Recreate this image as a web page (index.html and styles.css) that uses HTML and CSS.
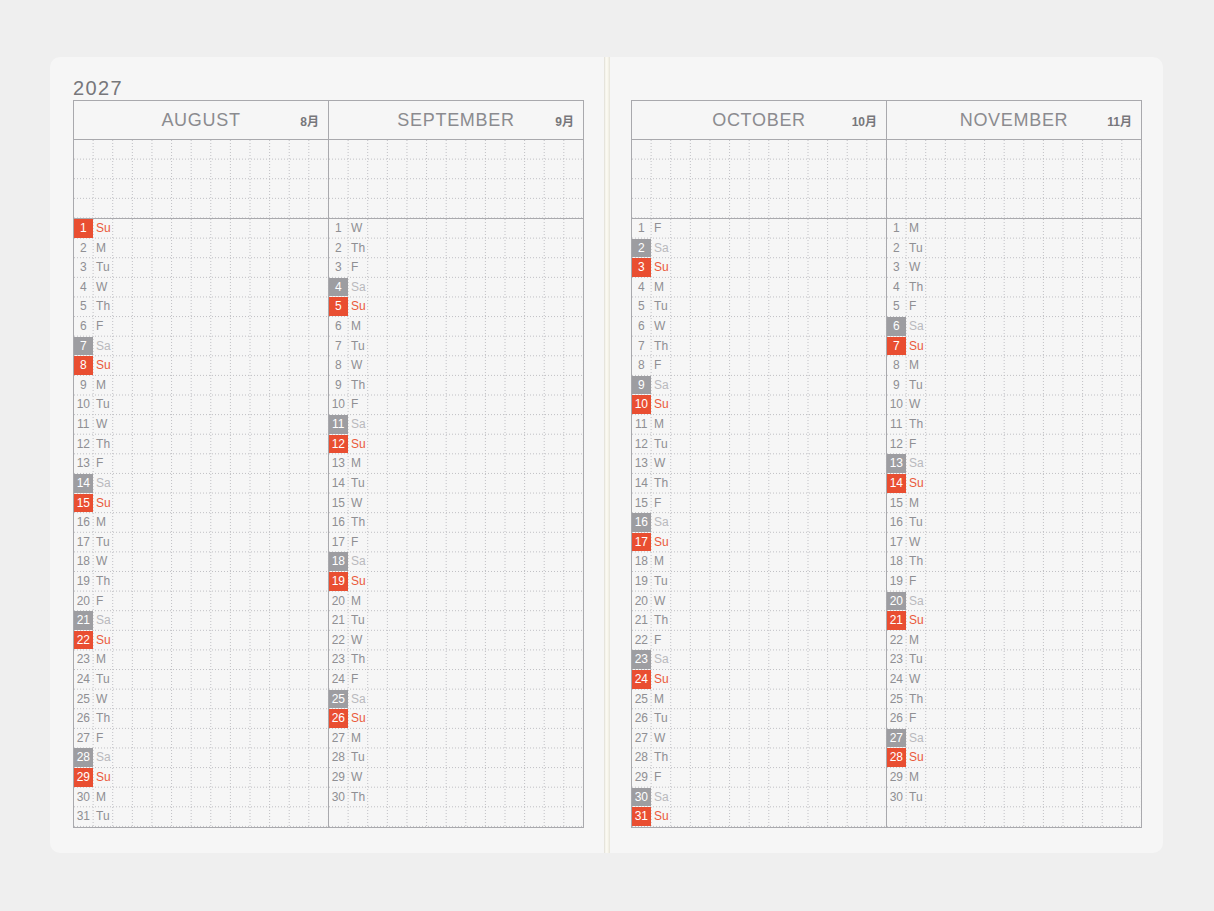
FILE: index.html
```html
<!DOCTYPE html>
<html lang="en">
<head>
<meta charset="utf-8">
<title>2027 Monthly Planner</title>
<link rel="stylesheet" href="styles.css">
</head>
<body>
<div class="spread">
  <section class="page page-left">
    <div class="year">2027</div>
    <div class="sheet">
      <div class="month">
        <div class="mhead"><span class="mname">AUGUST</span><span class="mjp">8月</span></div>
        <div class="notes dotgrid"></div>
        <ol class="days dotgrid">
          <li class="su"><span class="n">1</span><span class="w">Su</span></li>
          <li><span class="n">2</span><span class="w">M</span></li>
          <li><span class="n">3</span><span class="w">Tu</span></li>
          <li><span class="n">4</span><span class="w">W</span></li>
          <li><span class="n">5</span><span class="w">Th</span></li>
          <li><span class="n">6</span><span class="w">F</span></li>
          <li class="sa"><span class="n">7</span><span class="w">Sa</span></li>
          <li class="su"><span class="n">8</span><span class="w">Su</span></li>
          <li><span class="n">9</span><span class="w">M</span></li>
          <li><span class="n">10</span><span class="w">Tu</span></li>
          <li><span class="n">11</span><span class="w">W</span></li>
          <li><span class="n">12</span><span class="w">Th</span></li>
          <li><span class="n">13</span><span class="w">F</span></li>
          <li class="sa"><span class="n">14</span><span class="w">Sa</span></li>
          <li class="su"><span class="n">15</span><span class="w">Su</span></li>
          <li><span class="n">16</span><span class="w">M</span></li>
          <li><span class="n">17</span><span class="w">Tu</span></li>
          <li><span class="n">18</span><span class="w">W</span></li>
          <li><span class="n">19</span><span class="w">Th</span></li>
          <li><span class="n">20</span><span class="w">F</span></li>
          <li class="sa"><span class="n">21</span><span class="w">Sa</span></li>
          <li class="su"><span class="n">22</span><span class="w">Su</span></li>
          <li><span class="n">23</span><span class="w">M</span></li>
          <li><span class="n">24</span><span class="w">Tu</span></li>
          <li><span class="n">25</span><span class="w">W</span></li>
          <li><span class="n">26</span><span class="w">Th</span></li>
          <li><span class="n">27</span><span class="w">F</span></li>
          <li class="sa"><span class="n">28</span><span class="w">Sa</span></li>
          <li class="su"><span class="n">29</span><span class="w">Su</span></li>
          <li><span class="n">30</span><span class="w">M</span></li>
          <li><span class="n">31</span><span class="w">Tu</span></li>
        </ol>
      </div>
      <div class="month">
        <div class="mhead"><span class="mname">SEPTEMBER</span><span class="mjp">9月</span></div>
        <div class="notes dotgrid"></div>
        <ol class="days dotgrid">
          <li><span class="n">1</span><span class="w">W</span></li>
          <li><span class="n">2</span><span class="w">Th</span></li>
          <li><span class="n">3</span><span class="w">F</span></li>
          <li class="sa"><span class="n">4</span><span class="w">Sa</span></li>
          <li class="su"><span class="n">5</span><span class="w">Su</span></li>
          <li><span class="n">6</span><span class="w">M</span></li>
          <li><span class="n">7</span><span class="w">Tu</span></li>
          <li><span class="n">8</span><span class="w">W</span></li>
          <li><span class="n">9</span><span class="w">Th</span></li>
          <li><span class="n">10</span><span class="w">F</span></li>
          <li class="sa"><span class="n">11</span><span class="w">Sa</span></li>
          <li class="su"><span class="n">12</span><span class="w">Su</span></li>
          <li><span class="n">13</span><span class="w">M</span></li>
          <li><span class="n">14</span><span class="w">Tu</span></li>
          <li><span class="n">15</span><span class="w">W</span></li>
          <li><span class="n">16</span><span class="w">Th</span></li>
          <li><span class="n">17</span><span class="w">F</span></li>
          <li class="sa"><span class="n">18</span><span class="w">Sa</span></li>
          <li class="su"><span class="n">19</span><span class="w">Su</span></li>
          <li><span class="n">20</span><span class="w">M</span></li>
          <li><span class="n">21</span><span class="w">Tu</span></li>
          <li><span class="n">22</span><span class="w">W</span></li>
          <li><span class="n">23</span><span class="w">Th</span></li>
          <li><span class="n">24</span><span class="w">F</span></li>
          <li class="sa"><span class="n">25</span><span class="w">Sa</span></li>
          <li class="su"><span class="n">26</span><span class="w">Su</span></li>
          <li><span class="n">27</span><span class="w">M</span></li>
          <li><span class="n">28</span><span class="w">Tu</span></li>
          <li><span class="n">29</span><span class="w">W</span></li>
          <li><span class="n">30</span><span class="w">Th</span></li>
        </ol>
      </div>
    </div>
  </section>
  <div class="spine"></div>
  <section class="page page-right">
    <div class="year"></div>
    <div class="sheet">
      <div class="month">
        <div class="mhead"><span class="mname">OCTOBER</span><span class="mjp">10月</span></div>
        <div class="notes dotgrid"></div>
        <ol class="days dotgrid">
          <li><span class="n">1</span><span class="w">F</span></li>
          <li class="sa"><span class="n">2</span><span class="w">Sa</span></li>
          <li class="su"><span class="n">3</span><span class="w">Su</span></li>
          <li><span class="n">4</span><span class="w">M</span></li>
          <li><span class="n">5</span><span class="w">Tu</span></li>
          <li><span class="n">6</span><span class="w">W</span></li>
          <li><span class="n">7</span><span class="w">Th</span></li>
          <li><span class="n">8</span><span class="w">F</span></li>
          <li class="sa"><span class="n">9</span><span class="w">Sa</span></li>
          <li class="su"><span class="n">10</span><span class="w">Su</span></li>
          <li><span class="n">11</span><span class="w">M</span></li>
          <li><span class="n">12</span><span class="w">Tu</span></li>
          <li><span class="n">13</span><span class="w">W</span></li>
          <li><span class="n">14</span><span class="w">Th</span></li>
          <li><span class="n">15</span><span class="w">F</span></li>
          <li class="sa"><span class="n">16</span><span class="w">Sa</span></li>
          <li class="su"><span class="n">17</span><span class="w">Su</span></li>
          <li><span class="n">18</span><span class="w">M</span></li>
          <li><span class="n">19</span><span class="w">Tu</span></li>
          <li><span class="n">20</span><span class="w">W</span></li>
          <li><span class="n">21</span><span class="w">Th</span></li>
          <li><span class="n">22</span><span class="w">F</span></li>
          <li class="sa"><span class="n">23</span><span class="w">Sa</span></li>
          <li class="su"><span class="n">24</span><span class="w">Su</span></li>
          <li><span class="n">25</span><span class="w">M</span></li>
          <li><span class="n">26</span><span class="w">Tu</span></li>
          <li><span class="n">27</span><span class="w">W</span></li>
          <li><span class="n">28</span><span class="w">Th</span></li>
          <li><span class="n">29</span><span class="w">F</span></li>
          <li class="sa"><span class="n">30</span><span class="w">Sa</span></li>
          <li class="su"><span class="n">31</span><span class="w">Su</span></li>
        </ol>
      </div>
      <div class="month">
        <div class="mhead"><span class="mname">NOVEMBER</span><span class="mjp">11月</span></div>
        <div class="notes dotgrid"></div>
        <ol class="days dotgrid">
          <li><span class="n">1</span><span class="w">M</span></li>
          <li><span class="n">2</span><span class="w">Tu</span></li>
          <li><span class="n">3</span><span class="w">W</span></li>
          <li><span class="n">4</span><span class="w">Th</span></li>
          <li><span class="n">5</span><span class="w">F</span></li>
          <li class="sa"><span class="n">6</span><span class="w">Sa</span></li>
          <li class="su"><span class="n">7</span><span class="w">Su</span></li>
          <li><span class="n">8</span><span class="w">M</span></li>
          <li><span class="n">9</span><span class="w">Tu</span></li>
          <li><span class="n">10</span><span class="w">W</span></li>
          <li><span class="n">11</span><span class="w">Th</span></li>
          <li><span class="n">12</span><span class="w">F</span></li>
          <li class="sa"><span class="n">13</span><span class="w">Sa</span></li>
          <li class="su"><span class="n">14</span><span class="w">Su</span></li>
          <li><span class="n">15</span><span class="w">M</span></li>
          <li><span class="n">16</span><span class="w">Tu</span></li>
          <li><span class="n">17</span><span class="w">W</span></li>
          <li><span class="n">18</span><span class="w">Th</span></li>
          <li><span class="n">19</span><span class="w">F</span></li>
          <li class="sa"><span class="n">20</span><span class="w">Sa</span></li>
          <li class="su"><span class="n">21</span><span class="w">Su</span></li>
          <li><span class="n">22</span><span class="w">M</span></li>
          <li><span class="n">23</span><span class="w">Tu</span></li>
          <li><span class="n">24</span><span class="w">W</span></li>
          <li><span class="n">25</span><span class="w">Th</span></li>
          <li><span class="n">26</span><span class="w">F</span></li>
          <li class="sa"><span class="n">27</span><span class="w">Sa</span></li>
          <li class="su"><span class="n">28</span><span class="w">Su</span></li>
          <li><span class="n">29</span><span class="w">M</span></li>
          <li><span class="n">30</span><span class="w">Tu</span></li>
        </ol>
      </div>
    </div>
  </section>
</div>
</body>
</html>
```

FILE: styles.css
```css
* { box-sizing: border-box; }

body {
  margin: 0;
  background: #efefef;
  font-family: "Liberation Sans", Arial, "Noto Sans CJK JP", sans-serif;
}

.spread {
  display: flex;
  width: 1113px;
  height: 796px;
  margin: 57px 0 0 50px;
}

.page {
  background: #f6f6f6;
  padding-top: 20px;
}

.page-left {
  width: 554px;
  padding-left: 23px;
  border-radius: 10px 0 0 10px;
}

.page-right {
  width: 553px;
  padding-left: 21px;
  border-radius: 0 10px 10px 0;
}

.spine {
  width: 6px;
  background: linear-gradient(to right, #dcdad2 0, #efede4 1px, #fbfaf4 2px, #f8f6ec 4px, #eceae0 5px, #e6e4da 6px);
}

.year {
  height: 23px;
  font-size: 20px;
  line-height: 23px;
  letter-spacing: 1.4px;
  color: #77777b;
}

.sheet {
  display: flex;
  width: 511px;
  border: 1px solid #a9a9ad;
}

.month {
  flex: 1 1 0;
  min-width: 0;
}

.month + .month {
  border-left: 1px solid #a9a9ad;
}

.mhead {
  height: 39px;
  border-bottom: 1px solid #a9a9ad;
  display: grid;
  grid-template-columns: 1fr auto 1fr;
  align-items: center;
}

.mname {
  grid-column: 2;
  font-size: 18px;
  letter-spacing: 0.7px;
  color: #8b8b8f;
}

.mjp {
  grid-column: 3;
  justify-self: end;
  padding-right: 9px;
  font-size: 12px;
  font-weight: bold;
  color: #77777b;
}

.notes {
  height: 79px;
  border-bottom: 1px solid #a9a9ad;
}

.dotgrid {
  position: relative;
  isolation: isolate;
}

.dotgrid::before,
.dotgrid::after {
  content: "";
  position: absolute;
  inset: 0;
  z-index: -1;
  pointer-events: none;
}

.dotgrid::before {
  background: linear-gradient(to left, #bfbfc3 0 1px, transparent 1px) 0 0 / 19.62px 100%;
  -webkit-mask-image: repeating-linear-gradient(to bottom, #000 0 1px, transparent 1px 3px);
  mask-image: repeating-linear-gradient(to bottom, #000 0 1px, transparent 1px 3px);
}

.dotgrid::after {
  background: linear-gradient(to top, #bfbfc3 0 1px, transparent 1px) 0 0 / 100% 19.62px;
  -webkit-mask-image: repeating-linear-gradient(to right, #000 0 1px, transparent 1px 3px);
  mask-image: repeating-linear-gradient(to right, #000 0 1px, transparent 1px 3px);
}

.days {
  height: 608px;
  margin: 0;
  padding: 0;
  list-style: none;
}

.days li {
  display: flex;
  align-items: flex-start;
  height: 19.62px;
  font-size: 12px;
  color: #8f8f93;
}

.n {
  width: 18.62px;
  height: 18.62px;
  margin-right: 1px;
  line-height: 19px;
  text-align: center;
}

.w {
  padding-left: 2.5px;
  line-height: 19.62px;
}

.sa .n {
  background: #9d9da1;
  color: #fff;
}

.sa .w {
  color: #b9b9bd;
}

.su .n {
  background: #e94e31;
  color: #fff;
}

.su .w {
  color: #ea5a3c;
}
```
